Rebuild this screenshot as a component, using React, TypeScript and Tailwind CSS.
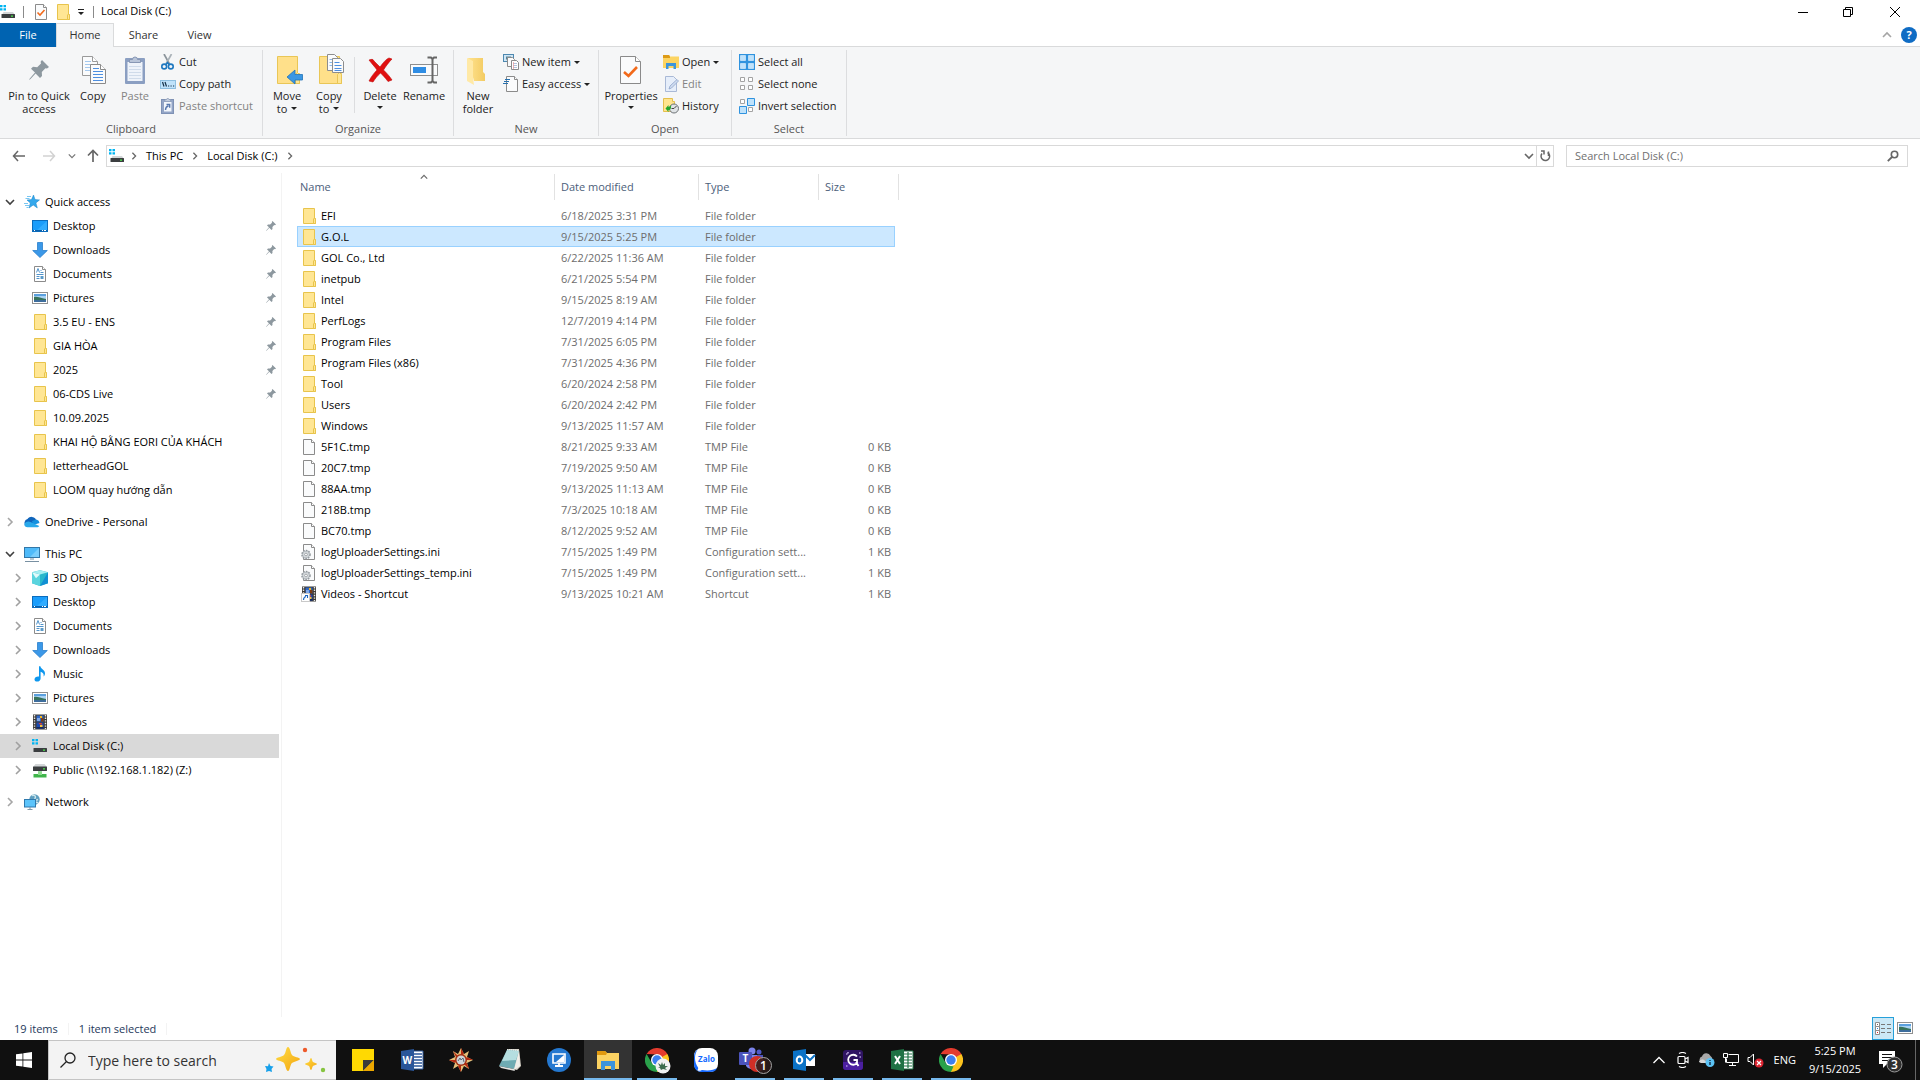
import React, { useState } from 'react';
import { clsx, type ClassValue } from 'clsx';
import { twMerge } from 'tailwind-merge';

function cn(...inputs: ClassValue[]) {
  return twMerge(clsx(inputs));
}

interface FileEntry {
  name: string;
  modified: string;
  type: string;
  size?: string;
  icon: React.ReactNode;
}

interface NavItem {
  label: string;
  icon: React.ReactNode;
  pinned?: boolean;
  active?: boolean;
}

/* ---------- small shared glyphs ---------- */

const Chevron = ({ dir, className }: { dir: 'up' | 'down' | 'right'; className?: string }) => (
  <svg viewBox="0 0 10 10" className={cn('size-[10px] shrink-0', className)} fill="none" stroke="currentColor" strokeWidth="1.6">
    {dir === 'up' && <path d="M1 7l4-4 4 4" />}
    {dir === 'down' && <path d="M1 3l4 4 4-4" />}
    {dir === 'right' && <path d="M3 1l4 4-4 4" />}
  </svg>
);

const Caret = () => (
  <svg viewBox="0 0 6 3" className="h-[3px] w-[6px] shrink-0" fill="#222">
    <path d="M0 0h6L3 3z" />
  </svg>
);

/* ---------- file and place icons, 16px ---------- */

const FolderIcon = () => (
  <svg viewBox="0 0 16 16" className="size-4 shrink-0">
    <path d="M2.5.5h11v10h1v5h-12z" fill="#ffe694" stroke="#e8c44c" />
    <path d="M12.5 15.5v-4.5l1-1 1 1v4.5z" fill="#ffe694" stroke="#e8c44c" />
  </svg>
);

const PageIcon = () => (
  <svg viewBox="0 0 16 16" className="size-4 shrink-0">
    <path d="M2.5.5h8l3 3v12h-11z" fill="#fafbfc" stroke="#8b8b8b" />
    <path d="M10.5.5v3h3" fill="#fff" stroke="#8b8b8b" />
  </svg>
);

const IniIcon = () => (
  <svg viewBox="0 0 16 16" className="size-4 shrink-0">
    <path d="M2.5.5h8l3 3v12h-11z" fill="#fafbfc" stroke="#8b8b8b" />
    <path d="M10.5.5v3h3" fill="#fff" stroke="#8b8b8b" />
    <circle cx="5" cy="10.5" r="4" fill="#d5d9dc" stroke="#93999e" strokeDasharray="1.6 1" strokeWidth="1.6" />
    <circle cx="5" cy="10.5" r="3.2" fill="#dfe3e6" stroke="#a5abb0" strokeWidth=".6" />
    <circle cx="5" cy="10.5" r="1.4" fill="#fff" stroke="#8b9196" strokeWidth=".8" />
  </svg>
);

const VideoIcon = ({ shortcut }: { shortcut?: boolean }) => (
  <svg viewBox="0 0 16 16" className="size-4 shrink-0">
    <rect x="1" y=".5" width="14" height="15" fill="#3d3a36" />
    <path d="M2.5 1v14M13.5 1v14" stroke="#e8e8e8" strokeWidth="1.4" strokeDasharray="1.4 1.2" />
    <rect x="4.5" y="1.5" width="7" height="6" fill="#2e67c8" />
    <rect x="4.5" y="8.5" width="7" height="6" fill="#1c4bb0" />
    <path d="M8 2h2v2H8z" fill="#f5b719" />
    <path d="M5 4h3v3H5z" fill="#7fa8e8" />
    <path d="M9 4h2.5v3.5H9z" fill="#7a3b12" />
    <path d="M6.5 9h3l1 1.5H8z" fill="#e8432c" />
    <path d="M8 11h2.5v2H8z" fill="#f5c43a" />
    <path d="M4.500 13h7v1.500h-7z" fill="#14285c" />
    {shortcut && (
      <>
        <rect x=".5" y="7.5" width="8" height="8" fill="#fff" stroke="#c9c9c9" />
        <path d="M2.5 14c0-2 .8-3 2.500-3.500M4 9.500h2.500V12" fill="none" stroke="#1a66c4" strokeWidth="1.1" />
      </>
    )}
  </svg>
);

const DesktopIcon = () => (
  <svg viewBox="0 0 16 16" className="size-4 shrink-0">
    <rect x=".5" y="2.5" width="15" height="11" fill="#1a9dfb" stroke="#0b6cbd" />
    <path d="M15 3L5 12H15z" fill="#31acff" />
    <path d="M1 12.5h14" stroke="#0a5fab" />
    <path d="M2 12.5h1M10 12.5h1M12 12.5h2" stroke="#fff" />
  </svg>
);

const DownloadsIcon = () => (
  <svg viewBox="0 0 16 16" className="size-4 shrink-0">
    <path d="M5.5.5h5v8h4.8L8 15.5.7 8.500h4.800z" fill="#3b98e8" stroke="#2a7fcb" strokeWidth=".8" />
  </svg>
);

const DocumentsIcon = () => (
  <svg viewBox="0 0 16 16" className="size-4 shrink-0">
    <path d="M2.5.5h8l3 3v12h-11z" fill="#fff" stroke="#8b8b8b" />
    <path d="M10.5.5v3h3" fill="#fff" stroke="#8b8b8b" />
    <path d="M4.5 6.5l1.5-4 1.5 4M8.5 4.5h1M8.5 6.5h3M4.5 8.5h7M4.5 10.5h3M4.5 12.5h3" stroke="#3d87c4" fill="none" strokeWidth=".9" />
    <path d="M8.5 10h3v3h-3z" fill="#5b9ac9" />
  </svg>
);

const PicturesIcon = () => (
  <svg viewBox="0 0 16 16" className="size-4 shrink-0">
    <rect x=".5" y="2.5" width="15" height="11" fill="#fff" stroke="#8f8f8f" />
    <rect x="2" y="4" width="12" height="8" fill="#a9d2f3" />
    <path d="M2 4h12v2H2z" fill="#5ba0de" />
    <path d="M2 7c3-1 6 1 12 2v1H2z" fill="#37725a" />
    <path d="M2 10h12v2H2z" fill="#3d6d9c" />
  </svg>
);

const MusicIcon = () => (
  <svg viewBox="0 0 16 16" className="size-4 shrink-0">
    <path d="M7 .3h1.4c.3 2.8 4.6 3.5 4.6 7 0 1.5-.7 2.7-1.4 3.2.5-2.4-.6-4-3-4.700V12.500c0 1.900-1.600 3.100-3.500 3.100-1.700 0-2.600-1-2.600-2.200 0-1.700 1.700-3 3.600-3l.9.1z" fill="#0e97ee" />
  </svg>
);

const CubeIcon = () => (
  <svg viewBox="0 0 16 16" className="size-4 shrink-0">
    <path d="M8 .2l8 2v11L8 16l-8-2.800v-11z" fill="#28b7cb" />
    <path d="M0 2.200L8 .2l8 2-8 2.300z" fill="#a5eef1" />
    <path d="M0 2.200l8 2.300V16l-8-2.800z" fill="#5ad4de" />
    <path d="M0 2.200l4 6L8 4.500z" fill="#e2fafa" />
    <path d="M8 16l8-2.800v-11z" fill="#118fd3" />
  </svg>
);

const DriveIcon = () => (
  <svg viewBox="0 0 16 16" className="size-4 shrink-0">
    <path d="M0 1h2.5v2.2H0zM3.500 1H6v2.200H3.500zM0 4.200h2.500v2.200H0zM3.500 4.200H6v2.200H3.500z" fill="#00b4f1" />
    <path d="M3.500 8h9.500l2 3h-13z" fill="#d3d6d8" />
    <rect x="1.5" y="10" width="13.5" height="4" rx=".5" fill="#3b3e40" />
    <rect x="11" y="11.5" width="2" height="1.3" fill="#4be04b" />
  </svg>
);

const NetDriveIcon = () => (
  <svg viewBox="0 0 16 16" className="size-4 shrink-0">
    <path d="M3.500 2h9l2.500 3H1z" fill="#d3d6d8" />
    <rect x="1" y="4.5" width="14" height="4.5" rx=".5" fill="#3b3e40" />
    <rect x="11" y="6.2" width="2" height="1.3" fill="#4be04b" />
    <path d="M6 9.500h4v2.500h4.500v3.500h-13V12H6z" fill="#3fb54b" />
    <path d="M6 10h4v3H6z" fill="#8fdc8f" />
  </svg>
);

const MonitorIcon = () => (
  <svg viewBox="0 0 16 16" className="size-4 shrink-0">
    <rect x=".5" y="1.5" width="15" height="10" fill="#4fbaf9" stroke="#3277a8" />
    <path d="M15 2v9H6z" fill="#79cdfc" />
    <path d="M6 12h4v2H6z" fill="#b9c8d2" />
    <path d="M1 15.5h14" stroke="#7890a2" />
  </svg>
);

const NetworkIcon = () => (
  <svg viewBox="0 0 16 16" className="size-4 shrink-0">
    <circle cx="10.5" cy="5.5" r="5.2" fill="#5f9fc0" />
    <path d="M8 1.500c3-1 4 1 3 3s1 2 3 1M12 8l2 1" stroke="#cfe7ec" strokeWidth="1.4" fill="none" />
    <rect x=".5" y="5.5" width="11" height="7.5" fill="#5cc4fb" stroke="#2f79ad" />
    <path d="M3.500 15.500h5M6 13v2.500" stroke="#7f99a9" />
  </svg>
);

const CloudIcon = () => (
  <svg viewBox="0 0 16 16" className="size-4 shrink-0">
    <path d="M2 12A4 4 0 0 1 3.500 5 5 5 0 0 1 12 5.500L9 10z" fill="#0f64bb" />
    <path d="M8 7l4.500-1.600A4 4 0 0 1 15.500 9L9 11z" fill="#1490df" />
    <path d="M.3 10.500C1 8 4 6.500 6.500 8l8.800 4c-.5.900-1.500 1.200-2.500 1.200H3.500c-1.800 0-3-1-3.200-2.700z" fill="#28a8ea" />
  </svg>
);

const StarIcon = () => (
  <svg viewBox="0 0 16 16" className="size-4 shrink-0">
    <path d="M9.500 1l1.500 4.500 4.500.4-3.600 3 1.400 5L9.200 11l-4.200 3 1.300-5L3 6l4.500-.4z" fill="#34a8ec" stroke="#1b84c8" strokeWidth=".5" />
    <path d="M3 2.500h4M1.500 4.500h4M0 9.500h4M1 11.500h4M2.500 13.500h2" stroke="#57b8ef" strokeWidth=".8" />
  </svg>
);

const PinIcon = ({ className }: { className?: string }) => (
  <svg viewBox="0 0 20 20" className={cn('size-[10px] shrink-0', className)} fill="#8d989f">
    <path d="M13 0l7 7-2 1.600-1.600-.4-3.600 3.800.2 4-2 2-4.400-4.600L1.500 19 0 20l.8-1.600L6 12.600 2 8.800l2-2 4.200.4L12 3.600l-.4-1.800z" />
  </svg>
);

/* ---------- ribbon icons ---------- */

const CopyIcon = () => (
  <svg viewBox="0 0 32 32" className="size-8">
    <path d="M5.5 2.5h10l5 5v14h-15z" fill="#fafbfc" stroke="#9a9a9a" />
    <path d="M15.5 2.5v5h5" fill="#fff" stroke="#9a9a9a" />
    <path d="M8 7.5h6M8 10.5h9M8 13.5h9M8 16.5h9" stroke="#a4c8ee" />
    <path d="M13.5 10.5h10l5 5v14h-15z" fill="#fafbfc" stroke="#8a8a8a" />
    <path d="M23.5 10.5v5h5" fill="#fff" stroke="#8a8a8a" />
    <path d="M16 14.5h6M16 17.5h10M16 20.5h10M16 23.5h10M16 26.5h10" stroke="#4d8fe0" />
  </svg>
);

const PasteIcon = () => (
  <svg viewBox="0 0 32 32" className="size-8">
    <rect x="6" y="4" width="20" height="26" rx="1" fill="#8b9fc2" />
    <path d="M8.5 8h15v19h-15z" fill="#eef3fa" />
    <path d="M10 12.5h12M10 15.5h12M10 18.5h12M10 21.5h12M10 24.5h12" stroke="#cfdbea" />
    <path d="M10.5 8.5v-3h3a2.5 2.5 0 0 1 5 0h3v3z" fill="#b9c5d9" stroke="#8797b4" />
  </svg>
);

const CutIcon = () => (
  <svg viewBox="0 0 16 16" className="size-4 shrink-0" fill="none">
    <path d="M4 0l5.5 10" stroke="#8b949b" strokeWidth="1.7" />
    <path d="M11.5 0L6 10" stroke="#aab2b8" strokeWidth="1.7" />
    <circle cx="4.2" cy="12.5" r="2.4" stroke="#1e78c0" strokeWidth="1.6" />
    <circle cx="10.8" cy="12.5" r="2.4" stroke="#1e78c0" strokeWidth="1.6" />
    <path d="M6 10.5l1.5-2 1.5 2" stroke="#1e78c0" strokeWidth="1.5" />
  </svg>
);

const CopyPathIcon = () => (
  <svg viewBox="0 0 16 16" className="size-4 shrink-0">
    <rect x=".5" y="4.5" width="15" height="8" fill="#bfe2fa" stroke="#8ebfe0" />
    <path d="M2.5 6l1.500 4.500M5 6l1.500 4.500M8 10h1.200M10.500 10h1.200M13 10h1.200" stroke="#16324a" strokeWidth="1.2" />
  </svg>
);

const PasteShortcutIcon = () => (
  <svg viewBox="0 0 16 16" className="size-4 shrink-0">
    <rect x="1.5" y="1.5" width="12" height="14" fill="#93a5c6" stroke="#7f92b5" />
    <rect x="4" y="4" width="7.5" height="9.5" fill="#f2f6fb" />
    <path d="M5 3.500v-2h1.500l.5-1h1.500l.5 1H10.500v2z" fill="#c3cddd" stroke="#8797b4" strokeWidth=".6" />
    <path d="M5.500 12c0-2 .8-3.500 3-4M6.500 6.500h3.200v3.200" stroke="#5878ae" strokeWidth="1.4" fill="none" />
  </svg>
);

const BigFolder = ({ children }: { children?: React.ReactNode }) => (
  <svg viewBox="0 0 32 32" className="size-8">
    <path d="M6.5 2.5h20v17h2v10h-22z" fill="#ffe08a" stroke="#e9c656" />
    <path d="M24.5 29.5v-9l2-2 2 2v9z" fill="#ffe694" stroke="#e9c656" />
    {children}
  </svg>
);

const MoveToIcon = () => (
  <BigFolder>
    <path d="M16 23l8-7v4.500h7.500v5.500H24V30z" fill="#3b97e3" stroke="#2273b8" strokeWidth=".8" />
  </BigFolder>
);

const CopyToIcon = () => (
  <BigFolder>
    <path d="M14.5.5h7l3 3v13h-10z" fill="#fafbfc" stroke="#8d8d8d" />
    <path d="M16.5 5.5h5M16.5 8.5h5M16.5 11.5h5" stroke="#8ab8ea" />
    <path d="M19.5 4.5h8l3 3v11h-11z" fill="#fafbfc" stroke="#8d8d8d" />
    <path d="M21.5 8.5h5M21.5 11.5h7M21.5 14.5h7M21.5 16.5h7" stroke="#4d8fe0" />
  </BigFolder>
);

const DeleteIcon = () => (
  <svg viewBox="0 0 32 32" className="size-8">
    <path d="M5 6c3-1 4-1 5 1l6 6c3-4 6-8 9-9l3 1c-3 3-6 7-8.500 11 3 3 6 6 8.500 10l-4 1.500c-3-4-5-6-7.500-8.500C13 22 11 25 9 28l-4-1c2-4 5-8 8-11-2-3-5-6-8-10z" fill="#e01010" stroke="#c00808" strokeWidth=".6" />
  </svg>
);

const RenameIcon = () => (
  <svg viewBox="0 0 32 32" className="size-8">
    <rect x="2.5" y="10.5" width="27" height="11" fill="#fafbfc" stroke="#8e8e8e" />
    <rect x="5" y="13" width="13" height="6" fill="#2f8de4" />
    <path d="M19.5 3.5h3.500l1.500 1.500L26 3.500h3M19.500 28.500h3.500l1.500-1.500 1.500 1.500h3M24.500 5v22" fill="none" stroke="#666" strokeWidth="2" />
  </svg>
);

const NewFolderIcon = () => (
  <svg viewBox="0 0 32 32" className="size-8">
    <defs>
      <linearGradient id="nf" x1="0" x2="1">
        <stop offset="0" stopColor="#ffe28e" />
        <stop offset="1" stopColor="#f3cb62" />
      </linearGradient>
    </defs>
    <path d="M6 4h15v14l2 2v7H12z" fill="url(#nf)" />
    <path d="M5 4l6 3v17l1 7-7-4z" fill="#ffe9a6" />
  </svg>
);

const NewItemIcon = () => (
  <svg viewBox="0 0 16 16" className="size-4 shrink-0">
    <rect x=".5" y=".5" width="10" height="7" fill="#cfe6f5" stroke="#4d88b0" />
    <path d="M3 2.500h5v3H3z" fill="#54859c" />
    <path d="M4.500 3.500h5l2 2v7h-7z" fill="#fafbfc" stroke="#8b8b8b" />
    <path d="M8.500 6.500h5l2 2v7h-7z" fill="#fff" stroke="#8b8b8b" />
    <path d="M10 9.500h4M10 11.500h4M10 13.500h4" stroke="#b3c4dd" />
    <path d="M10.500 8v7" stroke="#e99" strokeWidth=".7" />
  </svg>
);

const EasyAccessIcon = () => (
  <svg viewBox="0 0 16 16" className="size-4 shrink-0">
    <path d="M3.5.5h8l3 3v12h-11z" fill="#fafbfc" stroke="#8b8b8b" />
    <path d="M11.5.5v3h3" fill="#fff" stroke="#8b8b8b" />
    <path d="M2 3.500h5M1 5.500h5M0 7.500h5" stroke="#2670ad" strokeWidth="1.2" />
  </svg>
);

const PropertiesIcon = ({ className }: { className?: string }) => (
  <svg viewBox="0 0 32 32" className={cn('size-8', className)}>
    <path d="M5.5 2.5h15l5 5v22h-20z" fill="#fafbfc" stroke="#8a8a8a" />
    <path d="M20.5 2.5v5h5" fill="#fff" stroke="#8a8a8a" />
    <path d="M9 18l4.500 4L22 13" fill="none" stroke="#f26a1b" strokeWidth="2.6" />
  </svg>
);

// 16px page with a tick, used in the title bar
const TickPageIcon = () => (
  <svg viewBox="0 0 16 16" className="size-4 shrink-0">
    <path d="M2.5.5h8l3 3v12h-11z" fill="#fafbfc" stroke="#8b8b8b" />
    <path d="M10.5.5v3h3" fill="#fff" stroke="#8b8b8b" />
    <path d="M4.500 8.500l2.500 2.500 4.500-5" fill="none" stroke="#f26a1b" strokeWidth="1.6" />
  </svg>
);

const OpenIcon = () => (
  <svg viewBox="0 0 16 16" className="size-4 shrink-0">
    <path d="M0 1h6l1 1.500h9V14H0z" fill="#fcd462" />
    <path d="M0 1h6l1 1.500V4H0z" fill="#dd9b17" />
    <path d="M3 15V9h10v6h-2.500v-3h-5v3z" fill="#3d95db" />
  </svg>
);

const EditIcon = () => (
  <svg viewBox="0 0 16 16" className="size-4 shrink-0">
    <path d="M2.5.5h8l3 3v12h-11z" fill="#e6eefa" stroke="#a9b9d6" />
    <path d="M6 13l1-3 7-6.500 1.500 1.500L8.500 12z" fill="#cfdcf0" stroke="#8fa5ca" strokeWidth=".8" />
  </svg>
);

const HistoryIcon = () => (
  <svg viewBox="0 0 16 16" className="size-4 shrink-0">
    <path d="M.5.5h9v3h2v10H.5z" fill="#ffe48f" stroke="#e4bf4c" />
    <circle cx="11" cy="10.5" r="4.5" fill="#dfe3e6" stroke="#6d7276" />
    <path d="M11 10.500l2.500-2.500M11 10.500H8.500" stroke="#444" />
    <path d="M2.500 10.500l3-3.500v2c1 0 2-1 2.500-2 .5 3-.5 5-2.500 5v2z" fill="#23a52c" />
  </svg>
);

const selBlue = { fill: '#bfe2fb', stroke: '#2f93df' };
const selNone = { fill: '#fff', stroke: '#a3a3a3' };

const SelectAllIcon = () => (
  <svg viewBox="0 0 16 16" className="size-4 shrink-0">
    <rect width="16" height="16" fill="#2f93df" />
    <path d="M1.500 1.500h5v5h-5zM9.500 1.500h5v5h-5zM1.500 9.500h5v5h-5zM9.500 9.500h5v5h-5z" fill="#bfe2fb" stroke="#e4f4fe" strokeWidth=".6" />
  </svg>
);

const SelectNoneIcon = () => (
  <svg viewBox="0 0 16 16" className="size-4 shrink-0">
    <path d="M1.500 1.500h4v4h-4zM9.500 1.500h4v4h-4zM1.500 9.500h4v4h-4zM9.500 9.500h4v4h-4z" {...selNone} />
  </svg>
);

const InvertIcon = () => (
  <svg viewBox="0 0 16 16" className="size-4 shrink-0">
    <path d="M1.500 1.500h4v4h-4zM9.500 9.500h4v4h-4z" {...selNone} />
    <path d="M8.500.5h7v7h-7zM.5 8.500h7v7h-7z" {...selBlue} />
  </svg>
);

/* ---------- taskbar icons ---------- */

const ChromeIcon = ({ className }: { className?: string }) => (
  <svg viewBox="0 0 24 24" className={cn('size-6', className)}>
    <path d="M1.600 6A12 12 0 0 1 22.400 6L17 12 12 6.500z" fill="#e33b2e" />
    <path d="M22.400 6A12 12 0 0 1 12 24l-1-6 6.200-9V6z" fill="#fcc31e" />
    <path d="M12 24A12 12 0 0 1 1.600 6l5.200 9 5.200 3 2.500.5z" fill="#2aa14b" />
    <path d="M12 6h10.400L17 9z" fill="#e33b2e" />
    <circle cx="12" cy="12" r="6" fill="#fff" />
    <circle cx="12" cy="12" r="4.7" fill="#3d7ff0" />
  </svg>
);

const ChromeProfileIcon = () => (
  <span className="relative block size-6">
    <ChromeIcon />
    <svg viewBox="0 0 16 16" className="absolute -bottom-[2px] -right-[2px] size-4">
      <circle cx="8" cy="8" r="7.5" fill="#f1f1f1" />
      <path d="M3 5l3 2 1-3 1 3 2-2 0 3 3 0-3 2 2 2-4-1-2 1-1-2-2 0 2-1z" fill="#3c6b4c" />
    </svg>
  </span>
);

const StickyIcon = () => (
  <svg viewBox="0 0 24 24" className="size-6">
    <path d="M1 1h22v12l-9 10H1z" fill="#ffd902" />
    <path d="M12 12h11L12 23z" fill="#3a3a3a" />
    <path d="M23 12v11H12z" fill="#eda800" />
  </svg>
);

const WordIcon = () => (
  <svg viewBox="0 0 24 24" className="size-6">
    <path d="M12 3h11v18H12z" fill="#fff" stroke="#2a5699" />
    <path d="M14 6h8M14 9h8M14 12h8M14 15h8M14 18h8" stroke="#2a5699" strokeWidth="1.4" />
    <path d="M1 3l13-2v22L1 21z" fill="#2a5699" />
    <text x="2.500" y="16" fontSize="10" fontWeight="700" fill="#fff" fontFamily="Open Sans, sans-serif">W</text>
  </svg>
);

const CompassIcon = () => (
  <svg viewBox="0 0 24 24" className="size-6">
    <path d="M12 0l3 6 5-3-2 6 6 3-6 3 2 6-5-3-3 6-3-6-5 3 2-6-6-3 6-3-2-6 5 3z" fill="#e6c07b" />
    <path d="M12 0v8l3-2zM24 12h-8l2-3zM12 24v-8l-3 2zM0 12h8l-2 3zM4 3l6 6-3 0zM20 21l-6-6h4z" fill="#b52a12" />
    <circle cx="12" cy="12" r="6" fill="#a33214" />
    <circle cx="12" cy="12" r="4.5" fill="#cfd4d8" />
    <path d="M9 13l2-3 1 2 2-2 1 4" stroke="#5b6774" fill="none" />
  </svg>
);

const NotepadIcon = () => (
  <svg viewBox="0 0 24 24" className="size-6">
    <path d="M10 1l11 0 2 17-4 4-4-1z" fill="#d7d2c8" />
    <path d="M9 2l12 1-5 18L1 18z" fill="#6fabb2" />
    <path d="M9 2l12 1-3 9L4 13z" fill="#b5dee0" />
    <path d="M21 3l1 15-6 4z" fill="#f0eee9" />
    <path d="M1 18l15 3 1 2-14-3z" fill="#e4e4e0" />
    <path d="M9 1.500l12 1" stroke="#e8f4f4" strokeDasharray="1 1" />
  </svg>
);

const RemoteIcon = () => (
  <svg viewBox="0 0 24 24" className="size-6">
    <circle cx="12" cy="12" r="12" fill="#2478d0" />
    <path d="M6 6h12v9H6z" fill="#2478d0" stroke="#fff" strokeWidth="1.6" />
    <path d="M17 7v7H9z" fill="#fff" />
    <path d="M8 18h8M12 15v3" stroke="#fff" strokeWidth="1.8" />
  </svg>
);

const ExplorerIcon = () => (
  <svg viewBox="0 0 24 24" className="size-6">
    <path d="M1 3h8l2 2h12v16H1z" fill="#fbd262" />
    <path d="M1 3h8l2 2-1 2H1z" fill="#e0980f" />
    <path d="M5 22v-9h14v9h-4v-4H9v4z" fill="#3d94dc" />
  </svg>
);

const ZaloIcon = () => (
  <svg viewBox="0 0 24 24" className="size-6">
    <rect width="24" height="24" rx="8" fill="#fff" />
    <path d="M4 1C1 3 0 6 0 9v7c0 4 2 8 8 8h8c3 0 6-1 7-4-3 2-8 3-15 2-2 1-4 1-5 .5 1-1 1.500-2 1-3C0 14 0 6 4 1z" fill="#1468ff" />
    <text x="12.500" y="14" textAnchor="middle" fontSize="8" fontWeight="700" fill="#1468ff" fontFamily="Open Sans, sans-serif">Zalo</text>
  </svg>
);

const TeamsIcon = () => (
  <svg viewBox="0 0 34 28" className="h-7 w-[34px]">
    <circle cx="14" cy="5" r="3.5" fill="#7b83eb" />
    <circle cx="21" cy="6" r="2.5" fill="#5059c9" />
    <path d="M15 9h10v8c0 3-3 5-5 5h-5z" fill="#4b53bc" />
    <path d="M8 9h11v9a6 6 0 0 1-11 2z" fill="#7b83eb" />
    <rect x="1" y="6" width="13" height="13" rx="1" fill="#4b53bc" />
    <text x="7.500" y="16" textAnchor="middle" fontSize="10" fontWeight="700" fill="#fff" fontFamily="Open Sans, sans-serif">T</text>
    <circle cx="19" cy="18" r="8" fill="#d12f26" />
    <circle cx="25.5" cy="19.5" r="8" fill="#2b1c1c" fillOpacity=".85" stroke="#a5a5a5" />
    <text x="25.5" y="23.500" textAnchor="middle" fontSize="12" fontWeight="600" fill="#fff" fontFamily="Open Sans, sans-serif">1</text>
  </svg>
);

const OutlookIcon = () => (
  <svg viewBox="0 0 24 24" className="size-6">
    <path d="M12 6h11v12H12z" fill="#fff" />
    <path d="M13 7l5 5 5-5" stroke="#0b72c6" strokeWidth="2" fill="none" />
    <path d="M1 3l13-2v22L1 21z" fill="#0b72c6" />
    <ellipse cx="7.5" cy="12" rx="2.8" ry="3.5" stroke="#fff" strokeWidth="2" fill="none" />
  </svg>
);

const GIcon = () => (
  <svg viewBox="0 0 24 24" className="size-6">
    <rect x="2" y="2" width="20" height="20" rx="3" fill="#2f1463" />
    <path d="M2 14h20v5a3 3 0 0 1-3 3H5a3 3 0 0 1-3-3z" fill="#4b1fa0" />
    <path d="M16 8.500A5 5 0 1 0 16 15V12H12.500M15 14l2.500 4" fill="none" stroke="#fff" strokeWidth="1.8" />
    <path d="M5 6h1.500M18 5h1.500M5 18h1.500M18.500 9h1.500M7 4v1.500" stroke="#e0ccff" strokeWidth="1.2" />
  </svg>
);

const ExcelIcon = () => (
  <svg viewBox="0 0 24 24" className="size-6">
    <path d="M12 3h11v18H12z" fill="#fff" stroke="#1f7244" />
    <path d="M14 6h8M14 9h8M14 12h8M14 15h8M14 18h8M18 4v16" stroke="#1f7244" strokeWidth="1.2" />
    <path d="M1 3l13-2v22L1 21z" fill="#1f7244" />
    <path d="M5 8l5 8M10 8l-5 8" stroke="#fff" strokeWidth="2" />
  </svg>
);

const SparkleArt = () => (
  <svg viewBox="0 0 64 32" className="h-8 w-16">
    <defs>
      <linearGradient id="gold" x1="0" y1="0" x2="1" y2="1">
        <stop offset="0" stopColor="#ffdd45" />
        <stop offset="1" stopColor="#f3a50f" />
      </linearGradient>
    </defs>
    <path d="M24 3c2 0 2.500 6 4 8s8 2.500 8 4-6 2.500-8 4-2 8-4 8-2.500-6-4-8-8-2.500-8-4 6-2 8-4 2-8 4-8z" fill="url(#gold)" />
    <path d="M47 14c1 0 1 3 2 4s4 1 4 2-3 1-4 2-1 4-2 4-1-3-2-4-4-1-4-2 3-1 4-2 1-4 2-4z" fill="url(#gold)" />
    <path d="M5 19l1.500 3 3 .5-2 2.500.5 3-3-1-3 1 .5-3L1 22l3 .2z" fill="#17a0ea" />
    <circle cx="41" cy="6" r="2.2" fill="#ee5a2a" />
    <circle cx="59" cy="26" r="2.2" fill="#86c440" />
  </svg>
);

/* ---------- data ---------- */

const folder = <FolderIcon />;
const page = <PageIcon />;

const files: FileEntry[] = [
  { name: 'EFI', modified: '6/18/2025 3:31 PM', type: 'File folder', icon: folder },
  { name: 'G.O.L', modified: '9/15/2025 5:25 PM', type: 'File folder', icon: folder },
  { name: 'GOL Co., Ltd', modified: '6/22/2025 11:36 AM', type: 'File folder', icon: folder },
  { name: 'inetpub', modified: '6/21/2025 5:54 PM', type: 'File folder', icon: folder },
  { name: 'Intel', modified: '9/15/2025 8:19 AM', type: 'File folder', icon: folder },
  { name: 'PerfLogs', modified: '12/7/2019 4:14 PM', type: 'File folder', icon: folder },
  { name: 'Program Files', modified: '7/31/2025 6:05 PM', type: 'File folder', icon: folder },
  { name: 'Program Files (x86)', modified: '7/31/2025 4:36 PM', type: 'File folder', icon: folder },
  { name: 'Tool', modified: '6/20/2024 2:58 PM', type: 'File folder', icon: folder },
  { name: 'Users', modified: '6/20/2024 2:42 PM', type: 'File folder', icon: folder },
  { name: 'Windows', modified: '9/13/2025 11:57 AM', type: 'File folder', icon: folder },
  { name: '5F1C.tmp', modified: '8/21/2025 9:33 AM', type: 'TMP File', size: '0 KB', icon: page },
  { name: '20C7.tmp', modified: '7/19/2025 9:50 AM', type: 'TMP File', size: '0 KB', icon: page },
  { name: '88AA.tmp', modified: '9/13/2025 11:13 AM', type: 'TMP File', size: '0 KB', icon: page },
  { name: '218B.tmp', modified: '7/3/2025 10:18 AM', type: 'TMP File', size: '0 KB', icon: page },
  { name: 'BC70.tmp', modified: '8/12/2025 9:52 AM', type: 'TMP File', size: '0 KB', icon: page },
  { name: 'logUploaderSettings.ini', modified: '7/15/2025 1:49 PM', type: 'Configuration sett...', size: '1 KB', icon: <IniIcon /> },
  { name: 'logUploaderSettings_temp.ini', modified: '7/15/2025 1:49 PM', type: 'Configuration sett...', size: '1 KB', icon: <IniIcon /> },
  { name: 'Videos - Shortcut', modified: '9/13/2025 10:21 AM', type: 'Shortcut', size: '1 KB', icon: <VideoIcon shortcut /> },
];

const quickAccess: NavItem[] = [
  { label: 'Desktop', icon: <DesktopIcon />, pinned: true },
  { label: 'Downloads', icon: <DownloadsIcon />, pinned: true },
  { label: 'Documents', icon: <DocumentsIcon />, pinned: true },
  { label: 'Pictures', icon: <PicturesIcon />, pinned: true },
  { label: '3.5 EU - ENS', icon: folder, pinned: true },
  { label: 'GIA HÒA', icon: folder, pinned: true },
  { label: '2025', icon: folder, pinned: true },
  { label: '06-CDS Live', icon: folder, pinned: true },
  { label: '10.09.2025', icon: folder },
  { label: 'KHAI HỘ BẰNG EORI CỦA KHÁCH', icon: folder },
  { label: 'letterheadGOL', icon: folder },
  { label: 'LOOM quay hướng dẫn', icon: folder },
];

const thisPc: NavItem[] = [
  { label: '3D Objects', icon: <CubeIcon /> },
  { label: 'Desktop', icon: <DesktopIcon /> },
  { label: 'Documents', icon: <DocumentsIcon /> },
  { label: 'Downloads', icon: <DownloadsIcon /> },
  { label: 'Music', icon: <MusicIcon /> },
  { label: 'Pictures', icon: <PicturesIcon /> },
  { label: 'Videos', icon: <VideoIcon /> },
  { label: 'Local Disk (C:)', icon: <DriveIcon />, active: true },
  { label: 'Public (\\\\192.168.1.182) (Z:)', icon: <NetDriveIcon /> },
];

const taskbarApps: { label: string; icon: React.ReactNode; state?: 'active' | 'open' }[] = [
  { label: 'Sticky Notes', icon: <StickyIcon /> },
  { label: 'Word', icon: <WordIcon /> },
  { label: 'Compass', icon: <CompassIcon /> },
  { label: 'Notepad', icon: <NotepadIcon /> },
  { label: 'Remote', icon: <RemoteIcon /> },
  { label: 'File Explorer', icon: <ExplorerIcon />, state: 'active' },
  { label: 'Chrome profile', icon: <ChromeProfileIcon />, state: 'open' },
  { label: 'Zalo', icon: <ZaloIcon /> },
  { label: 'Teams', icon: <TeamsIcon />, state: 'open' },
  { label: 'Outlook', icon: <OutlookIcon />, state: 'open' },
  { label: 'G', icon: <GIcon />, state: 'open' },
  { label: 'Excel', icon: <ExcelIcon />, state: 'open' },
  { label: 'Chrome', icon: <ChromeIcon />, state: 'open' },
];

/* ---------- ribbon ---------- */

const BigButton = ({ icon, lines, caret, disabled, className }: {
  icon: React.ReactNode;
  lines: string[];
  caret?: boolean;
  disabled?: boolean;
  className?: string;
}) => (
  <button disabled={disabled} className={cn('flex flex-col items-center whitespace-nowrap leading-[13px] disabled:text-[#838383]', className)}>
    <span className="flex h-[38px] items-center">{icon}</span>
    {lines.map((line, i) => (
      <span key={line} className="flex items-center gap-1">
        {line}
        {caret && i > 0 && i === lines.length - 1 && <Caret />}
      </span>
    ))}
    {caret && lines.length === 1 && <span className="flex h-[11px] items-center"><Caret /></span>}
  </button>
);

const SmallButton = ({ icon, label, caret, disabled }: {
  icon: React.ReactNode;
  label: string;
  caret?: boolean;
  disabled?: boolean;
}) => (
  <button disabled={disabled} className="flex h-[22px] items-center gap-[3px] whitespace-nowrap disabled:text-[#838383]">
    {icon}
    <span>{label}</span>
    {caret && <Caret />}
  </button>
);

const RibbonGroup = ({ label, className, children }: { label: string; className?: string; children: React.ReactNode }) => (
  <section aria-label={label} className={cn('mb-[2px] mt-[3px] flex flex-col border-r border-[#dcdddf]', className)}>
    <div className="flex flex-1 items-start pt-px">{children}</div>
    <div className="h-[15px] text-center leading-[15px] text-[#555]">{label}</div>
  </section>
);

const Ribbon = () => (
  <div className="flex h-[93px] border-y border-[#d9dadb] bg-[#f5f6f7] text-[#222]">
    <RibbonGroup label="Clipboard" className="w-[263px]">
      <BigButton icon={<PinIcon className="size-5" />} lines={['Pin to Quick', 'access']} className="ml-1 w-[70px]" />
      <BigButton icon={<CopyIcon />} lines={['Copy']} className="w-[38px]" />
      <BigButton icon={<PasteIcon />} lines={['Paste']} disabled className="w-[46px]" />
      <div className="pl-[2px]">
        <SmallButton icon={<CutIcon />} label="Cut" />
        <SmallButton icon={<CopyPathIcon />} label="Copy path" />
        <SmallButton icon={<PasteShortcutIcon />} label="Paste shortcut" disabled />
      </div>
    </RibbonGroup>
    <RibbonGroup label="Organize" className="w-[191px]">
      <BigButton icon={<MoveToIcon />} lines={['Move', 'to']} caret className="ml-[3px] w-[42px]" />
      <BigButton icon={<CopyToIcon />} lines={['Copy', 'to']} caret className="w-[42px]" />
      <div className="ml-1 mt-[6px] h-[56px] w-px bg-[#dcdddf]" />
      <BigButton icon={<DeleteIcon />} lines={['Delete']} caret className="ml-1 w-[42px]" />
      <BigButton icon={<RenameIcon />} lines={['Rename']} className="w-[46px]" />
    </RibbonGroup>
    <RibbonGroup label="New" className="w-[145px]">
      <BigButton icon={<NewFolderIcon />} lines={['New', 'folder']} className="ml-[3px] w-[42px]" />
      <div className="pl-1">
        <SmallButton icon={<NewItemIcon />} label="New item" caret />
        <SmallButton icon={<EasyAccessIcon />} label="Easy access" caret />
      </div>
    </RibbonGroup>
    <RibbonGroup label="Open" className="w-[133px]">
      <BigButton icon={<PropertiesIcon />} lines={['Properties']} caret className="ml-1 w-[56px]" />
      <div className="pl-1">
        <SmallButton icon={<OpenIcon />} label="Open" caret />
        <SmallButton icon={<EditIcon />} label="Edit" disabled />
        <SmallButton icon={<HistoryIcon />} label="History" />
      </div>
    </RibbonGroup>
    <RibbonGroup label="Select" className="w-[115px]">
      <div className="pl-[7px]">
        <SmallButton icon={<SelectAllIcon />} label="Select all" />
        <SmallButton icon={<SelectNoneIcon />} label="Select none" />
        <SmallButton icon={<InvertIcon />} label="Invert selection" />
      </div>
    </RibbonGroup>
  </div>
);

/* ---------- window chrome ---------- */

const TitleBar = () => (
  <header className="flex h-[23px] items-center">
    <DriveIcon />
    <span className="ml-[7px] h-3 w-px bg-[#8a8a8a]" />
    <button aria-label="Properties" className="ml-[9px]"><TickPageIcon /></button>
    <button aria-label="New folder" className="ml-[6px]"><FolderIcon /></button>
    <button aria-label="Customize" className="ml-[6px]">
      <svg viewBox="0 0 8 8" className="size-2" fill="#222"><path d="M1 1h6v1H1zM1 4h6L4 7z" /></svg>
    </button>
    <span className="ml-[8px] h-3 w-px bg-[#8a8a8a]" />
    <h1 className="ml-[7px] text-[11px] text-black">Local Disk (C:)</h1>
    <div className="ml-auto flex">
      <button aria-label="Minimize" className="flex w-[46px] justify-center">
        <svg viewBox="0 0 10 10" className="size-[10px]"><path d="M0 5.500h10" stroke="#000" /></svg>
      </button>
      <button aria-label="Restore" className="flex w-[44px] justify-center">
        <svg viewBox="0 0 10 10" className="size-[10px]" fill="none" stroke="#000"><path d="M.5 2.500h7v7h-7zM2.500 2.500v-2h7v7h-2" /></svg>
      </button>
      <button aria-label="Close" className="flex w-[50px] justify-center">
        <svg viewBox="0 0 10 10" className="size-[10px]"><path d="M0 0l10 10M10 0L0 10" stroke="#000" /></svg>
      </button>
    </div>
  </header>
);

const Tabs = () => (
  <nav className="relative z-10 -mb-px flex h-[24px] text-[#333]">
    <button className="w-[56px] bg-[#0063b1] text-white">File</button>
    <button className="w-[58px] border-x border-t border-[#dadbdc] bg-[#f5f6f7]">Home</button>
    <button className="w-[59px]">Share</button>
    <button className="w-[53px]">View</button>
    <div className="ml-auto flex items-center">
      <button aria-label="Collapse ribbon"><Chevron dir="up" className="text-[#a5a5a5]" /></button>
      <button aria-label="Help" className="ml-[9px] mr-[3px] flex size-4 items-center justify-center rounded-full bg-[#0f6cc4] text-[11px] font-bold text-white">?</button>
    </div>
  </nav>
);

const AddressBar = () => {
  const [query, setQuery] = useState('');
  return (
    <div className="flex h-[34px] items-center pl-3 pr-3">
      <button aria-label="Back" className="text-[#666]">
        <svg viewBox="0 0 14 14" className="size-[14px]" fill="none" stroke="currentColor" strokeWidth="1.5"><path d="M13 7H1.500M6 2L1.500 7 6 12" /></svg>
      </button>
      <button aria-label="Forward" disabled className="ml-4 text-[#d2d2d2]">
        <svg viewBox="0 0 14 14" className="size-[14px]" fill="none" stroke="currentColor" strokeWidth="1.5"><path d="M1 7h11.500M8 2l4.500 5L8 12" /></svg>
      </button>
      <button aria-label="Recent locations" className="ml-3"><Chevron dir="down" className="size-2 text-[#777]" /></button>
      <button aria-label="Up" className="ml-[10px] text-[#666]">
        <svg viewBox="0 0 14 14" className="size-[14px]" fill="none" stroke="currentColor" strokeWidth="1.7"><path d="M7 13V1.500M2 6.500l5-5 5 5" /></svg>
      </button>
      <div className="ml-[6px] flex h-[22px] flex-1 items-center border border-[#d9d9d9] text-black">
        <span className="ml-[2px]"><DriveIcon /></span>
        <Chevron dir="right" className="ml-[5px] size-2 text-[#666]" />
        <a href="#this-pc" className="ml-2">This PC</a>
        <Chevron dir="right" className="ml-2 size-2 text-[#666]" />
        <a href="#local-disk" className="ml-2">Local Disk (C:)</a>
        <Chevron dir="right" className="ml-2 size-2 text-[#666]" />
        <button aria-label="Previous locations" className="ml-auto mr-[2px]"><Chevron dir="down" className="text-[#666]" /></button>
        <button aria-label="Refresh" className="flex h-full w-[17px] items-center justify-center border-l border-[#d9d9d9]">
          <svg viewBox="0 0 12 12" className="size-3" fill="none" stroke="#666" strokeWidth="1.5"><path d="M8.500 2.500A4.300 4.300 0 1 1 3 3.500M9.500 6V1.500M2 1h3v3.500" /></svg>
        </button>
      </div>
      <div className="ml-3 flex h-[22px] w-[342px] items-center border border-[#d9d9d9] pl-2 pr-2">
        <input
          aria-label="Search Local Disk (C:)"
          value={query}
          onChange={(e) => setQuery(e.target.value)}
          placeholder="Search Local Disk (C:)"
          className="min-w-0 flex-1 outline-none placeholder:text-[#707070]"
        />
        <svg viewBox="0 0 12 12" className="size-3" fill="none" stroke="#666"><circle cx="7.5" cy="4.5" r="3.2" strokeWidth="1.6" /><path d="M5 7L.8 11.200" strokeWidth="1.8" /></svg>
      </div>
    </div>
  );
};

/* ---------- navigation pane ---------- */

const RootRow = ({ label, icon, open }: { label: string; icon: React.ReactNode; open?: boolean }) => (
  <button className="flex h-6 w-full items-center pl-[5px] text-left">
    <Chevron dir={open ? 'down' : 'right'} className={open ? 'text-[#404040]' : 'text-[#a6a6a6]'} />
    <span className="ml-[9px]">{icon}</span>
    <span className="ml-[5px]">{label}</span>
  </button>
);

const ChildRow = ({ item, expandable }: { item: NavItem; expandable?: boolean }) => (
  <button className={cn('flex h-6 w-full items-center pl-[13px] pr-[3px] text-left', item.active && 'bg-[#d9d9d9]')}>
    <span className="w-[10px]">{expandable && <Chevron dir="right" className="text-[#a0a0a0]" />}</span>
    <span className="ml-[9px]">{item.icon}</span>
    <span className="ml-[5px] flex-1 whitespace-nowrap">{item.label}</span>
    {item.pinned && <PinIcon />}
  </button>
);

const Sidebar = () => (
  <aside className="flex w-[282px] shrink-0 flex-col gap-2 border-r border-[#f3f3f3] pr-[2px] pt-[17px] text-black">
    <div>
      <RootRow label="Quick access" icon={<StarIcon />} open />
      {quickAccess.map((item) => <ChildRow key={item.label} item={item} />)}
    </div>
    <RootRow label="OneDrive - Personal" icon={<CloudIcon />} />
    <div>
      <RootRow label="This PC" icon={<MonitorIcon />} open />
      {thisPc.map((item) => <ChildRow key={item.label} item={item} expandable />)}
    </div>
    <RootRow label="Network" icon={<NetworkIcon />} />
  </aside>
);

/* ---------- file list ---------- */

const FileList = () => {
  const [selected, setSelected] = useState('G.O.L');
  const heads = ['Name', 'Date modified', 'Type', 'Size'];

  return (
    <main className="flex-1 pl-[15px] pt-px">
      <table className="w-[602px] table-fixed border-separate border-spacing-0 text-left">
        <colgroup>
          <col className="w-[258px]" />
          <col className="w-[144px]" />
          <col className="w-[120px]" />
          <col className="w-[76px]" />
          <col className="w-[4px]" />
        </colgroup>
        <thead>
          <tr className="h-[31px] align-top text-[#4c607a]">
            {heads.map((head, i) => (
              <th key={head} colSpan={i === 3 ? 2 : 1} className="relative p-0 font-normal">
                <button className={cn('block h-[26px] w-full border-r border-[#e2e2e2] text-left', i === 0 ? 'pl-[3px]' : 'pl-[6px]')}>{head}</button>
                {i === 0 && <Chevron dir="up" className="absolute left-[123px] top-[-1px] size-2 text-[#6d6d6d]" />}
              </th>
            ))}
          </tr>
        </thead>
        <tbody>
          {files.map((file) => {
            const cell = cn(
              'h-[21px] whitespace-nowrap border-y border-transparent p-0 leading-[19px]',
              file.name === selected && 'border-[#99d1ff] bg-[#cce8ff]'
            );
            return (
              <tr key={file.name} onClick={() => setSelected(file.name)} className="text-[#6d6d6d]">
                <td className={cn(cell, 'border-l pl-[3px] text-black')}>
                  <span className="flex items-center gap-1">{file.icon}{file.name}</span>
                </td>
                <td className={cn(cell, 'pl-[6px]')}>{file.modified}</td>
                <td className={cn(cell, 'pl-[6px]')}>{file.type}</td>
                <td className={cn(cell, 'border-r pr-[3px] text-right')}>{file.size}</td>
              </tr>
            );
          })}
        </tbody>
      </table>
    </main>
  );
};

const StatusBar = () => (
  <footer className="flex h-[23px] items-center text-[#1e395b]">
    <span className="ml-[14px] pt-px">19 items</span>
    <span className="ml-[10px] h-3 w-px bg-[#f3f3f3]" />
    <span className="ml-[10px] pt-px">1 item selected</span>
    <span className="ml-[10px] h-3 w-px bg-[#f3f3f3]" />
    <button aria-label="Details view" className="ml-auto flex h-[23px] w-[22px] items-center justify-center border border-[#26a0da] bg-[#cbe8f6]">
      <svg viewBox="0 0 16 14" className="h-[14px] w-4" fill="none">
        <path d="M.5.5h4v4h-4zM.5 4.500h4v4h-4zM.5 8.500h4v4h-4z" fill="#fff" stroke="#8c8c8c" />
        <path d="M6 2.500h4M12 2.500h4M6 6.500h4M12 6.500h4M6 10.500h4M12 10.500h4" stroke="#777" />
        <path d="M2 6.500h1" stroke="#2b82d9" />
        <path d="M2 10.500h1" stroke="#e02020" />
        <path d="M2 2.500h1" stroke="#666" />
      </svg>
    </button>
    <button aria-label="Thumbnail view" className="ml-[3px] mr-[7px] pb-[2px]"><PicturesIcon /></button>
  </footer>
);

/* ---------- taskbar ---------- */

const Taskbar = () => (
  <div className="flex h-10 items-center bg-[#101010] text-white">
    <button aria-label="Start" className="flex h-full w-12 items-center justify-center">
      <svg viewBox="0 0 16 16" className="size-4" fill="#fff"><path d="M0 2.300l6.500-.9v6.200H0zM7.300 1.300L16 0v7.600H7.300zM0 8.400h6.500v6.200L0 13.700zM7.300 8.400H16V16l-8.700-1.300z" /></svg>
    </button>
    <label className="flex h-full w-[288px] items-center border-y border-l border-[#c4c4c4] bg-[#f3f3f3] pl-[11px] pr-2">
      <svg viewBox="0 0 16 16" className="size-4 shrink-0" fill="none" stroke="#222" strokeWidth="1.3"><circle cx="10" cy="6" r="5" /><path d="M6.500 9.500L.5 15.500" /></svg>
      <input aria-label="Type here to search" placeholder="Type here to search" className="ml-3 min-w-0 flex-1 text-[14px] outline-none placeholder:text-[#333]" />
      <SparkleArt />
    </label>
    <div className="ml-[3px] flex h-full gap-px">
      {taskbarApps.map((app) => (
        <button key={app.label} aria-label={app.label} className={cn('flex h-full w-12 flex-col items-center', app.state === 'active' && 'bg-[#333]')}>
          <span className="flex h-[38px] items-center justify-center pt-[2px]">{app.icon}</span>
          {app.state && <span className={cn('h-[2px] bg-[#76b9ed]', app.state === 'active' ? 'w-12' : 'w-10')} />}
        </button>
      ))}
    </div>
    <div className="ml-auto flex h-full items-center">
      <button aria-label="Show hidden icons">
        <svg viewBox="0 0 12 8" className="h-2 w-3" fill="none" stroke="#fff" strokeWidth="1.3"><path d="M.5 7L6 1.500 11.500 7" /></svg>
      </button>
      <button aria-label="Meet Now" className="ml-[10px]">
        <svg viewBox="0 0 16 16" className="size-4" fill="none" stroke="#fff" strokeWidth="1.2">
          <rect x="3" y="4.5" width="7" height="7" rx="1" /><path d="M10 7l3-1.500v5L10 9M4 1.500C6 .3 9 .3 11 1.500M4 14.500c2 1.200 5 1.200 7 0" />
        </svg>
      </button>
      <button aria-label="OneDrive" className="ml-[7px]">
        <svg viewBox="0 0 17 16" className="h-4 w-[17px]">
          <path d="M3.500 11A3.500 3.500 0 0 1 4 4.500 4.500 4.500 0 0 1 12.500 4 4 4 0 0 1 12 11z" fill="#a8a8a8" />
          <path d="M1 10c0-2 3-3 5-2l4 3H3z" fill="#d8d8d8" />
          <circle cx="12" cy="10.5" r="4.5" fill="#5cc3f5" />
          <path d="M12 8v1M12 10v3" stroke="#10233a" strokeWidth="1.3" />
        </svg>
      </button>
      <button aria-label="Network" className="ml-2">
        <svg viewBox="0 0 16 14" className="h-[14px] w-4" fill="none" stroke="#fff">
          <path d="M5.500 1.500h10v8h-12v-4M.5.5h4v4h-4zM2.500 4.500v5M9.500 9.500v3M6 12.500h7" />
        </svg>
      </button>
      <button aria-label="Volume muted" className="ml-2">
        <svg viewBox="0 0 17 16" className="h-4 w-[17px]">
          <path d="M1 5.500h2l3.500-3.500v11L3 9.500H1z" fill="none" stroke="#fff" />
          <circle cx="12" cy="11" r="4.5" fill="#dc2430" />
          <path d="M10 9l4 4M14 9l-4 4" stroke="#fff" strokeWidth="1.2" />
        </svg>
      </button>
      <button className="ml-[10px] text-[11px]">ENG</button>
      <button className="ml-3 w-[54px] whitespace-nowrap text-center text-[11px] leading-[18px]">
        <span className="block">5:25 PM</span>
        <span className="block">9/15/2025</span>
      </button>
      <button aria-label="Notifications" className="ml-4">
        <svg viewBox="0 0 26 26" className="size-[26px]">
          <path d="M1 4h16v13H9l-4 4v-4H1z" fill="#fff" />
          <path d="M4 7.500h10M4 10.500h10M4 13.500h6" stroke="#101010" />
          <circle cx="16.5" cy="17.5" r="7.5" fill="#2e2e2e" stroke="#9a9a9a" />
          <text x="16.500" y="21.500" textAnchor="middle" fontSize="12" fontWeight="600" fill="#fff" fontFamily="Open Sans, sans-serif">3</text>
        </svg>
      </button>
      <button aria-label="Show desktop" className="ml-[11px] h-full w-[5px] border-l border-[#666]" />
    </div>
  </div>
);

export default function App() {
  return (
    <div className="flex min-h-screen flex-col bg-white font-['Open_Sans','Noto_Sans',sans-serif] text-[11px]">
      <TitleBar />
      <Tabs />
      <Ribbon />
      <AddressBar />
      <div className="flex flex-1">
        <Sidebar />
        <FileList />
      </div>
      <StatusBar />
      <Taskbar />
    </div>
  );
}
